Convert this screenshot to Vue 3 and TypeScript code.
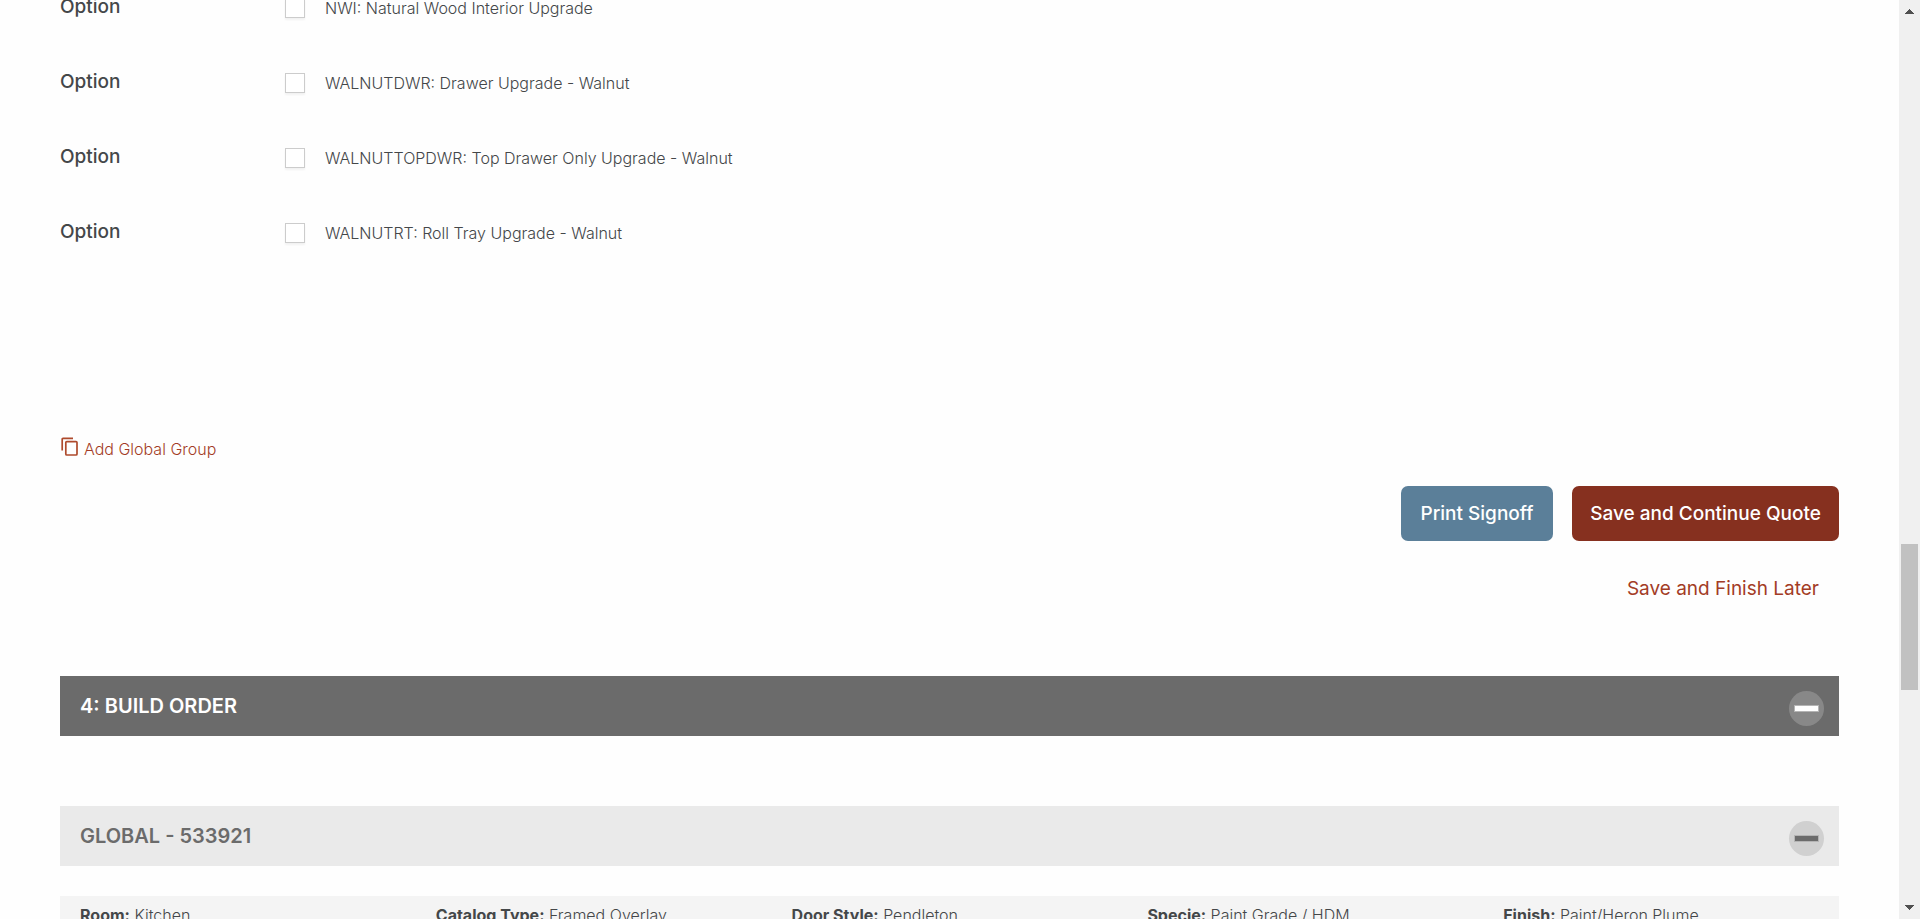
<script setup lang="ts">
import { ref } from 'vue'

interface Option {
  code: string
  name: string
  checked: boolean
}

interface Detail {
  label: string
  value: string
}

const options = ref<Option[]>([
  { code: 'NWI', name: 'Natural Wood Interior Upgrade', checked: false },
  { code: 'WALNUTDWR', name: 'Drawer Upgrade - Walnut', checked: false },
  { code: 'WALNUTTOPDWR', name: 'Top Drawer Only Upgrade - Walnut', checked: false },
  { code: 'WALNUTRT', name: 'Roll Tray Upgrade - Walnut', checked: false },
])

const details: Detail[] = [
  { label: 'Room', value: 'Kitchen' },
  { label: 'Catalog Type', value: 'Framed Overlay' },
  { label: 'Door Style', value: 'Pendleton' },
  { label: 'Specie', value: 'Paint Grade / HDM' },
  { label: 'Finish', value: 'Paint/Heron Plume' },
]
</script>

<template>
  <div class="page">
    <main class="content">
      <div class="options">
        <div v-for="option in options" :key="option.code" class="option">
          <span class="option-title">Option</span>
          <input :id="option.code" v-model="option.checked" class="option-box" type="checkbox" />
          <label class="option-name" :for="option.code">{{ option.code }}: {{ option.name }}</label>
        </div>
      </div>

      <a class="add-group" href="#">
        <svg class="copy-icon" viewBox="0 0 18 20" aria-hidden="true">
          <path d="M2.2 13.5V2.2Q2.2 1.4 3 1.4H13" />
          <rect x="5.8" y="4.6" width="11.2" height="13.4" rx="1" />
        </svg>
        <span>Add Global Group</span>
      </a>

      <div class="actions">
        <div class="action-row">
          <button class="btn btn-print" type="button">Print Signoff</button>
          <button class="btn btn-save" type="button">Save and Continue Quote</button>
        </div>
        <a class="btn btn-later" href="#">Save and Finish Later</a>
      </div>

      <section class="bar bar-dark">
        <h2>4: BUILD ORDER</h2>
        <button class="toggle" type="button" aria-label="Collapse build order"></button>
      </section>

      <section class="bar bar-light">
        <h2>GLOBAL - 533921</h2>
        <button class="toggle" type="button" aria-label="Collapse global group"></button>
      </section>

      <div class="details">
        <div v-for="detail in details" :key="detail.label" class="detail">
          <strong>{{ detail.label }}:</strong> {{ detail.value }}
        </div>
      </div>
    </main>

    <div class="scrollbar" aria-hidden="true">
      <svg class="arrow" viewBox="0 0 9 5" shape-rendering="crispEdges"><path d="M4 0h1v1h1v1h1v1h1v1h1v1H0V4h1V3h1V2h1V1h1z" /></svg>
      <div class="track">
        <div class="thumb"></div>
      </div>
      <svg class="arrow" viewBox="0 0 9 5" shape-rendering="crispEdges"><path d="M0 0h9v1H8v1H7v1H6v1H5v1H4V4H3V3H2V2H1V1H0z" /></svg>
    </div>
  </div>
</template>

<style>
body {
  margin: 0;
  background: #fefefe;
}
</style>

<style scoped>
.page {
  display: flex;
  height: 100vh;
  overflow: hidden;
  box-sizing: border-box;
  color: #444749;
  font-family: Inter, 'Open Sans', sans-serif;
  font-size: 16px;
  font-weight: 300;
  line-height: 24px;
}

.content {
  flex: 1;
  min-width: 0;
  padding: 0 60px;
}

.options {
  margin-top: -30px;
}

.option {
  display: grid;
  grid-template-columns: 225px 20px 1fr;
  align-items: center;
  height: 75px;
}

.option-title {
  padding-bottom: 2px;
  font-size: 19px;
  font-weight: 500;
}

.option-box {
  appearance: none;
  width: 20px;
  height: 20px;
  margin: 0;
  border: 1px solid #ccc;
  background: #fff;
  box-shadow: 0 2px 2px rgba(0, 0, 0, 0.05);
}

.option-box:checked {
  background: #86301f;
}

.option-name {
  padding-left: 20px;
}

.add-group {
  display: flex;
  align-items: flex-start;
  gap: 6px;
  width: max-content;
  margin-top: 167px;
  color: #a33c26;
  text-decoration: none;
}

.copy-icon {
  width: 18px;
  height: 20px;
  fill: none;
  stroke: #ae4a2c;
  stroke-width: 1.7;
}

.actions {
  display: flex;
  flex-direction: column;
  align-items: flex-end;
  gap: 20px;
  margin-top: 25px;
}

.action-row {
  display: flex;
  gap: 19px;
}

.btn {
  box-sizing: border-box;
  height: 55px;
  padding: 0 18px;
  border: 0;
  border-radius: 7px;
  font-family: inherit;
  font-size: 19px;
  font-weight: 500;
  line-height: 55px;
  text-align: center;
  text-decoration: none;
  white-space: nowrap;
}

.btn-print {
  min-width: 152px;
  background: #5b7f99;
  color: #fff;
}

.btn-save {
  min-width: 267px;
  background: #86301f;
  color: #fff;
}

.btn-later {
  padding: 0 20px;
  color: #a33c26;
  font-weight: 400;
}

.bar {
  display: flex;
  align-items: center;
  justify-content: space-between;
  height: 60px;
  padding: 0 15px 0 20px;
}

.bar h2 {
  margin: 0;
  font-size: 20px;
  font-weight: 600;
}

.bar-dark {
  margin-top: 60px;
  background: #6b6b6b;
  color: #fff;
}

.bar-light {
  margin-top: 70px;
  background: #eaeaea;
  color: #6b6b6b;
}

.toggle {
  display: grid;
  place-items: center;
  width: 35px;
  height: 35px;
  margin-top: 5px;
  padding: 0;
  border: 0;
  border-radius: 50%;
  background: #888;
  color: inherit;
}

.bar-light .toggle {
  background: #d0d0d0;
}

.toggle::before {
  content: '';
  width: 23px;
  height: 5px;
  border: 1px solid #b4b4b4;
  background: currentColor;
}

.details {
  display: grid;
  grid-template-columns: repeat(5, 1fr);
  margin-top: 30px;
  padding: 7px 0;
  background: #f4f4f4;
}

.detail {
  padding-left: 20px;
  white-space: nowrap;
}

.detail strong {
  font-weight: 700;
}

.scrollbar {
  display: flex;
  flex-direction: column;
  align-items: center;
  box-sizing: border-box;
  width: 21px;
  padding: 9px 0;
  background: #f0f0f0;
}

.arrow {
  width: 9px;
  height: 5px;
  fill: #505050;
}

.track {
  display: flex;
  flex: 1;
  flex-direction: column;
}

.thumb {
  width: 17px;
  height: 146px;
  margin-top: 530px;
  background: #c1c1c1;
}
</style>
